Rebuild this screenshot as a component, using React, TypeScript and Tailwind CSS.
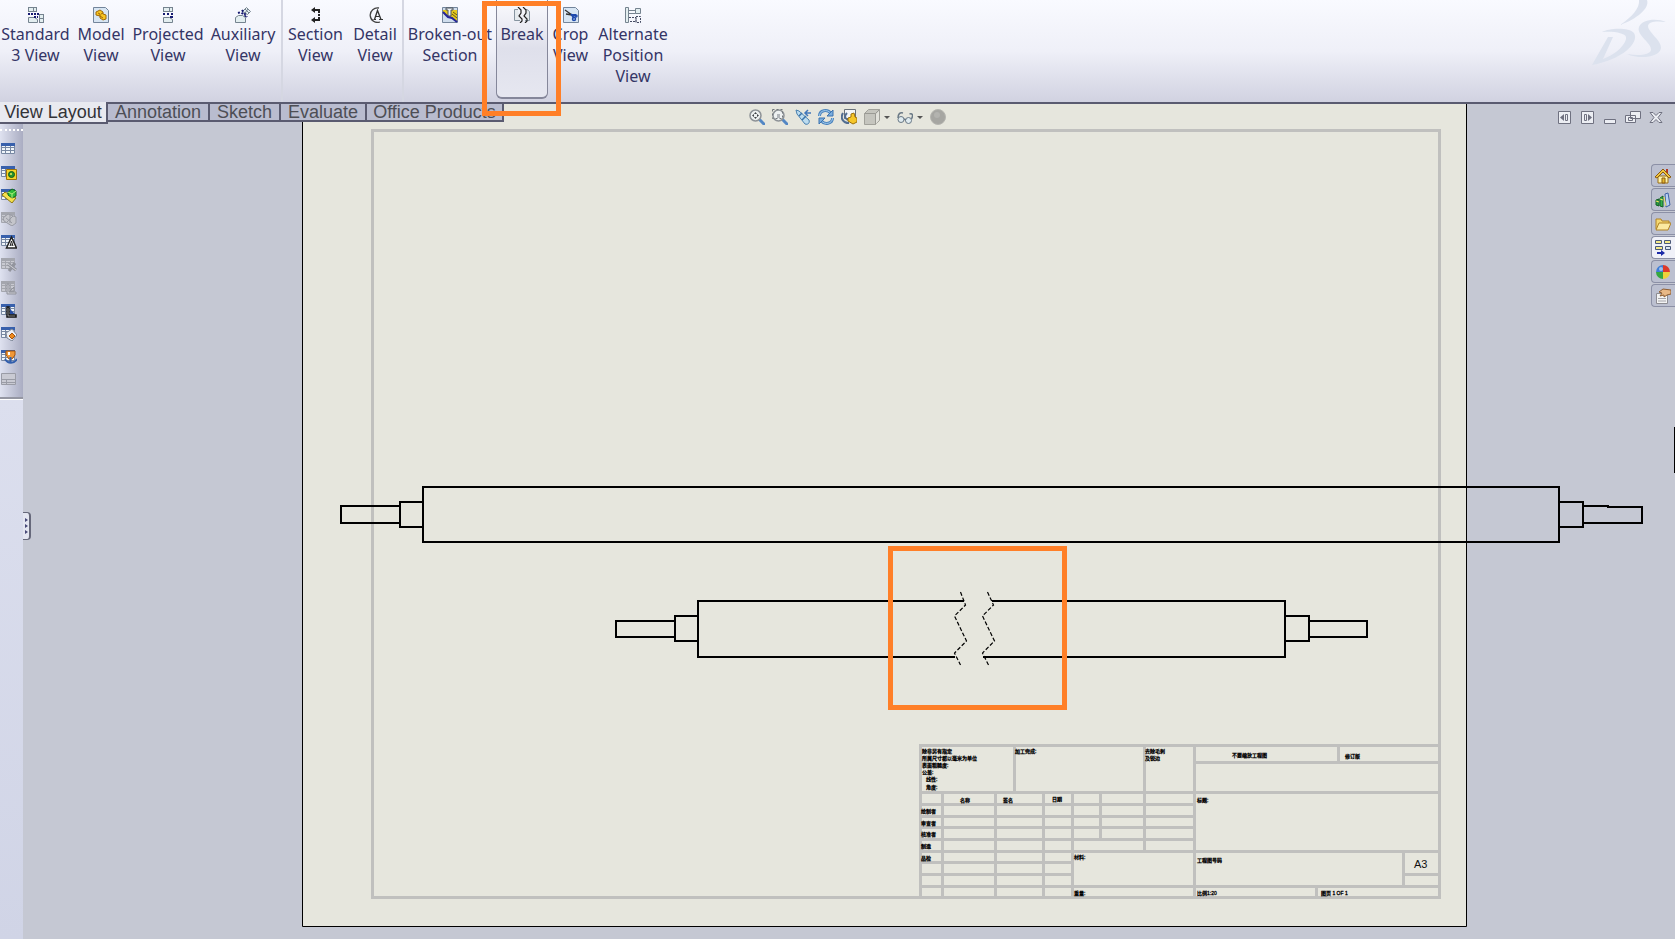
import React, { useState } from 'react';

type Icon = React.ReactNode;

const Svg = ({ children, className = 'h-4 w-4' }: { children: React.ReactNode; className?: string }) => (
  <svg viewBox="0 0 16 16" className={`${className} shrink-0`} fill="none" aria-hidden="true">
    {children}
  </svg>
);

// Small light box used by most of the view icons
const Box = ({ x, y, w, h }: { x: number; y: number; w: number; h: number }) => (
  <rect x={x + 0.5} y={y + 0.5} width={w - 1} height={h - 1} fill="#e3eef0" stroke="#75838f" />
);

const Page = () => <path d="M.5.5h12l3 3v12H.5z" fill="#d7e5f3" stroke="#73859b" />;

const ribbonIcons: Record<string, Icon> = {
  standard: (
    <Svg>
      <Box x={0} y={0} w={9} h={5} />
      <path d="M5.5 0v5" stroke="#75838f" />
      <path d="M0 7h11" stroke="#161a70" strokeWidth="2" strokeDasharray="2 1" />
      <path d="M.5 10.5h6l3 2v3h-9z" fill="#e3eef0" stroke="#75838f" />
      <path d="M6 10h4" stroke="#161a70" strokeWidth="2" strokeDasharray="2 1" />
      <Box x={11} y={7} w={5} h={9} />
      <path d="M11 11.5h5" stroke="#75838f" />
    </Svg>
  ),
  model: (
    <Svg>
      <Page />
      <path d="M3 5l4-2 3 2v2l3 1v4l-3 1-3-2V9L3 8z" fill="#f6c321" stroke="#a06a08" />
      <path d="M5 6l2 1v2l3 2M8 7l2-1" stroke="#a06a08" />
    </Svg>
  ),
  projected: (
    <Svg>
      <Box x={3} y={0} w={10} h={5} />
      <path d="M9.5 0v5" stroke="#75838f" />
      <path d="M3 7h10" stroke="#161a70" strokeWidth="2" strokeDasharray="2 2" />
      <path d="M3.500 10.500h6l3 2v3h-9z" fill="#e3eef0" stroke="#75838f" />
      <path d="M10 10h3" stroke="#161a70" strokeWidth="2" />
    </Svg>
  ),
  auxiliary: (
    <Svg>
      <path d="M7.500 4.500l4-4 4 4-3 3z" fill="#e3eef0" stroke="#75838f" />
      <path d="M10 2l4 4M10 6l3-4" stroke="#75838f" />
      <path d="M3 6l3-1 5 5M7 3l5 7" stroke="#161a70" strokeWidth="2" strokeDasharray="2 2" />
      <path d="M.5 10.500l3-2h4l3 2v5H.5z" fill="#e3eef0" stroke="#75838f" />
    </Svg>
  ),
  section: (
    <Svg>
      <path d="M5 3h6v3M5 13h6v-3M11 7v2" stroke="#222" strokeWidth="2" />
      <path d="M7 0v6L3 3zM7 10v6l-4-3z" fill="#222" />
    </Svg>
  ),
  detail: (
    <Svg>
      <path d="M12 1A7.300 7.300 0 1 0 13 15" stroke="#444" strokeWidth="1.300" />
      <path d="M7.500 12.500l3-9 3.500 9" stroke="#333" strokeWidth="1.300" />
      <path d="M8.500 9.500h4M6.500 12.500h2.500M12 12.500h4" stroke="#333" />
    </Svg>
  ),
  broken: (
    <Svg>
      <path d="M.5.5h15v15H.5z" fill="#cfdded" stroke="#73859b" />
      <path d="M1 3h14v12L9 10 4 9 1 6z" fill="#e6c91e" />
      <path d="M4 1h7v2H9v6H6V3H4z" fill="#edf3f7" stroke="#4c535a" />
      <path d="M1 5l5 5 4 1 5 4" stroke="#25259a" strokeWidth="2" />
      <path d="M11 5l4 3M10 7l5 4" stroke="#675a12" />
    </Svg>
  ),
  brk: (
    <Svg>
      <path d="M4 2.500H.5v11H6M11 2.500h2l2.500 2v9H11" fill="#e5eaee" stroke="#8794a0" />
      <path d="M4 0l3 3v3L5 9l3 3v2l-2 2M9 0l3 3v3l-2 3 3 3v2l-2 2" stroke="#222" strokeWidth="1.200" />
    </Svg>
  ),
  crop: (
    <Svg>
      <Page />
      <path d="M2 3l7 5M3 7l6 1" stroke="#333" strokeWidth="1.300" />
      <path d="M8 7l3 4M9 8h4" stroke="#1d49ad" strokeWidth="2" />
      <circle cx="11" cy="12" r="1.500" stroke="#1d49ad" strokeWidth="1.500" />
      <circle cx="13" cy="9" r="1" stroke="#1d49ad" strokeWidth="1.500" />
    </Svg>
  ),
  alternate: (
    <Svg>
      <path d="M.5.5h3v15h-3zM3.500 3.500h7M3.500 6.500h7M10.500 1.500h5v5h-5z" fill="#e3eef0" stroke="#75838f" />
      <path d="M4 10.500h7v4H4M11 9.500h4.500v6H11z" stroke="#454b62" strokeDasharray="2 1" />
    </Svg>
  ),
};

const ribbonGroups = [
  [
    { id: 'standard', lines: ['Standard', '3 View'], width: 'w-[71px]' },
    { id: 'model', lines: ['Model', 'View'], width: 'w-[60px]' },
    { id: 'projected', lines: ['Projected', 'View'], width: 'w-[74px]' },
    { id: 'auxiliary', lines: ['Auxiliary', 'View'], width: 'w-[76px]' },
  ],
  [
    { id: 'section', lines: ['Section', 'View'], width: 'w-[65px]' },
    { id: 'detail', lines: ['Detail', 'View'], width: 'w-[54px]' },
  ],
  [
    { id: 'broken', lines: ['Broken-out', 'Section'], width: 'w-[92px]' },
    { id: 'brk', lines: ['Break'], width: 'w-[52px]' },
    { id: 'crop', lines: ['Crop', 'View'], width: 'w-[45px]' },
    { id: 'alternate', lines: ['Alternate', 'Position', 'View'], width: 'w-[80px]' },
  ],
];

function Ribbon() {
  return (
    <header className="relative flex h-[104px] shrink-0 overflow-hidden border-b-2 border-[#5a5b70] bg-linear-to-b from-[#f9faff] via-[#eff0f8] to-[#d1d2e1]">
      {ribbonGroups.map((group, i) => (
        <div key={i} className={`flex ${i < 2 ? 'border-r-2 border-[#d5d7e2]' : ''}`}>
          {group.map((item) => (
            <button
              key={item.id}
              type="button"
              className={`flex flex-col items-center whitespace-nowrap pt-[7px] text-[16px] leading-[21px] text-[#343566] ${item.width} ${
                item.id === 'brk'
                  ? 'h-[99px] rounded-b-md border-x border-b-2 border-[#85879a] bg-linear-to-b from-[#fafafe] via-[#dfe0eb] to-[#e6e7f0]'
                  : ''
              }`}
            >
              {ribbonIcons[item.id]}
              <span className="mt-px flex flex-col items-center">
                {item.lines.map((line) => (
                  <span key={line}>{line}</span>
                ))}
              </span>
            </button>
          ))}
        </div>
      ))}
      <svg viewBox="0 0 75 66" className="ml-auto mr-2 h-[66px] w-[75px]" fill="#dce2ee" aria-hidden="true">
        <path d="M47 0h8c3 8-10 19-27 25 12-8 20-17 19-25z" />
        <path d="M10 32c7-4 27-5 32 1 6 10-13 27-42 32l16-28h5L11 59c14-5 24-16 23-22-1-4-12-6-24-5z" />
        <path d="M74 22c-9-1-17-1-18 4 0 6 14 15 13 22-1 9-21 12-34 6 12 2 23 1 24-4 1-7-15-15-12-23 3-8 18-9 27-5z" />
      </svg>
    </header>
  );
}

const tabs = [
  { name: 'View Layout', width: 'w-[108px]' },
  { name: 'Annotation', width: 'w-[102px]' },
  { name: 'Sketch', width: 'w-[71px]' },
  { name: 'Evaluate', width: 'w-[86px]' },
  { name: 'Office Products', width: 'w-[137px]' },
];

function SheetTabs() {
  const [active, setActive] = useState('View Layout');
  return (
    <nav className="absolute left-0 top-0 flex items-start font-['Liberation_Sans',sans-serif] text-[18px]">
      {tabs.map((tab) => (
        <button
          key={tab.name}
          type="button"
          onClick={() => setActive(tab.name)}
          className={`whitespace-nowrap border-b-2 border-r-2 border-[#5a5b70] ${tab.width} ${
            active === tab.name
              ? '-mt-[2px] h-[22px] bg-[#e9eaf0] leading-[20px] text-[#333338]'
              : 'h-[18px] bg-[#b9bccf] leading-[16px] text-[#4d4e55]'
          }`}
        >
          {tab.name}
        </button>
      ))}
    </nav>
  );
}

const Grid = ({ off = false }: { off?: boolean }) => (
  <>
    <path d="M.5 2.500h13v10H.5z" fill={off ? '#c9cad1' : '#f0f5fa'} stroke={off ? '#a4a6ae' : '#7888a2'} />
    <path d="M.5 6.500h13M.5 9.500h13M4.500 5v8M9.500 5v8" stroke={off ? '#a4a6ae' : '#7888a2'} />
    <path d="M0 2h14v3H0z" fill={off ? '#a4a6ae' : '#3860ac'} />
  </>
);

const leftTools: { label: string; icon: Icon }[] = [
  { label: 'General table', icon: <Grid /> },
  {
    label: 'Hole table',
    icon: (
      <>
        <Grid />
        <path d="M5.500 5.500h10v10h-10z" fill="#f5d629" stroke="#a07207" />
        <circle cx="10.500" cy="10.500" r="3" fill="#27962e" stroke="#15591b" />
        <circle cx="10" cy="10" r="1" fill="#f5e859" />
      </>
    ),
  },
  {
    label: 'Bill of materials',
    icon: (
      <>
        <Grid />
        <path d="M1 8l3-3 11 6-4 5z" fill="#f3e04d" stroke="#8d7713" />
        <path d="M7 5l4-3 4 2v5l-4 2-4-3z" fill="#2dbb3b" stroke="#14661c" />
        <path d="M7 5l4 2 4-3M11 7v4" stroke="#b4ed7a" />
      </>
    ),
  },
  {
    label: 'Excel based table',
    icon: (
      <>
        <Grid off />
        <path d="M2 8l5-4 8 3v6l-4 3-8-5z" fill="#c4c5cb" stroke="#999ba4" />
        <path d="M5 8l6 5M6 12l6-6M9 5v8" stroke="#999ba4" />
      </>
    ),
  },
  {
    label: 'Revision table',
    icon: (
      <>
        <Grid />
        <path d="M10.500 4l5 11h-10z" fill="#fff" stroke="#222" strokeWidth="1.500" />
        <path d="M9 13l1.500-5 1.500 5M9 12h3" stroke="#222" />
      </>
    ),
  },
  {
    label: 'Weldment table',
    icon: (
      <>
        <Grid off />
        <path d="M7 8l8 6M14 7l-6 8" stroke="#92949d" strokeWidth="3" />
        <path d="M7 8l8 6" stroke="#d0d1d7" />
      </>
    ),
  },
  {
    label: 'Bend table',
    icon: (
      <>
        <Grid off />
        <path d="M8 5v8h7v2H6V5z" fill="#c9cad1" stroke="#92949d" />
        <path d="M9 12l4-4v4z" stroke="#92949d" />
      </>
    ),
  },
  {
    label: 'Weld table',
    icon: (
      <>
        <Grid />
        <path d="M6 5h2v8h7v2H6z" fill="#fff" stroke="#111" strokeWidth="1.500" />
        <path d="M9 12V7l5 5z" fill="#264da3" />
      </>
    ),
  },
  {
    label: 'Punch table',
    icon: (
      <>
        <Grid />
        <path d="M5 8l6-4 5 6-5 6-5-3z" fill="#edf0f5" stroke="#7d8798" />
        <path d="M11 8l3 3-3 3-3-3z" fill="#ee8a1d" stroke="#a6550d" />
      </>
    ),
  },
  {
    label: 'Design table',
    icon: (
      <>
        <Grid />
        <path d="M5 3h9v4l-3 4H8L5 7z" fill="#f09838" stroke="#a6550d" />
        <path d="M8 4v3" stroke="#fff" strokeWidth="2" />
        <path d="M9.500 9v5M4 11c3 5 9 5 12 0" stroke="#315eac" strokeWidth="2" />
      </>
    ),
  },
  {
    label: 'Title block table',
    icon: <path d="M.5 2.500h14v11H.5zM.5 8.500h14M.5 11.500h14M5.500 8v5" fill="#c9cad3" stroke="#9a9ca6" />,
  },
];

function TableToolbar() {
  return (
    <aside className="flex w-[23px] shrink-0 flex-col bg-[#d9dceb]">
      <div className="mt-5 flex flex-col border-b-2 border-[#9496a2] bg-linear-to-r from-[#dfe2f0] to-[#aaadc2] pb-[7px] pt-[5px]">
        <div className="mb-[6px] border-t-2 border-dotted border-white" />
        {leftTools.map((tool) => (
          <button key={tool.label} type="button" aria-label={tool.label} className="flex h-[23px] items-center pl-px">
            <Svg>{tool.icon}</Svg>
          </button>
        ))}
      </div>
      <div className="flex-1 border-t border-white bg-linear-to-b from-[#dcdfee] to-[#d0d4e6]" />
    </aside>
  );
}

const Lens = () => (
  <>
    <path d="M10 10l5 5" stroke="#5387c4" strokeWidth="3" strokeLinecap="round" />
    <circle cx="6.500" cy="6.500" r="5.500" fill="#eef1f1" stroke="#8d9296" strokeWidth="1.500" />
  </>
);

const viewTools: { label: string; icon: Icon; menu?: boolean; width: string }[] = [
  {
    label: 'Zoom to fit',
    width: 'w-[23px]',
    icon: (
      <>
        <Lens />
        <path d="M6.500 3l1.500 2H5zM6.500 10L8 8H5zM3 6.500L5 5v3zM10 6.500L8 5v3z" fill="#3f4347" />
      </>
    ),
  },
  {
    label: 'Zoom to area',
    width: 'w-[23px]',
    icon: (
      <>
        <Lens />
        <path d="M.5.5h10v9H.5z" stroke="#73787c" strokeDasharray="2 2" />
        <path d="M5 5h3v4H5z" fill="#b2b6ba" />
      </>
    ),
  },
  {
    label: 'Previous view',
    width: 'w-[23px]',
    icon: (
      <>
        <path d="M1 1l3 1 10 9c1 3-1 5-4 4L2 5z" fill="#bcdcef" stroke="#4a81b0" />
        <path d="M4 7l3-3M7 11l4-4" stroke="#3a73aa" strokeWidth="1.500" />
        <path d="M16 4h-6M13 1l-3 3 3 3" stroke="#4277ba" strokeWidth="1.500" />
      </>
    ),
  },
  {
    label: 'Rotate view',
    width: 'w-[23px]',
    icon: (
      <>
        <path d="M1.500 7c0-6 8-7 11-3M14.500 9c0 6-8 7-11 3" stroke="#4a83bd" strokeWidth="3" />
        <path d="M1.500 7c0-6 8-7 11-3M14.500 9c0 6-8 7-11 3" stroke="#a5cdee" />
        <path d="M15 1v6H9zM1 15V9h6z" fill="#79aedf" stroke="#3d73ae" />
      </>
    ),
  },
  {
    label: '3D drawing view',
    width: 'w-[23px]',
    icon: (
      <>
        <path d="M3.500.5h11v9h-11z" fill="#f3f6f7" stroke="#69717a" />
        <path d="M2 4c-3 5 0 10 6 10M6 4c-4 4-1 7 3 7" stroke="#526e91" strokeWidth="2" />
        <path d="M7 9l3-1V5l3-1 1 4 2 1v4l-4 2-5-3z" fill="#f5c629" stroke="#9c7009" />
      </>
    ),
  },
  {
    label: 'Display style',
    menu: true,
    width: 'w-[33px]',
    icon: (
      <>
        <path d="M.5 4.500l4-4h11v11l-4 4H.5z" fill="#c5c5be" stroke="#a1a19a" />
        <path d="M12 5l3-3v9l-3 4z" fill="#e2e2db" />
        <path d="M.5 4.500h11v11M11.500 4.500l4-4" stroke="#9a9a94" />
      </>
    ),
  },
  {
    label: 'Hide/show items',
    menu: true,
    width: 'w-[33px]',
    icon: (
      <>
        <circle cx="4" cy="10.500" r="3" fill="#dfebf0" stroke="#697885" />
        <circle cx="11.500" cy="11.500" r="3" fill="#dfebf0" stroke="#697885" />
        <path d="M1 9c0-4 2-6 5-5M7 10l2 1M14.500 10c2-4 1-6-2-5" stroke="#697885" strokeWidth="1.500" />
      </>
    ),
  },
  {
    label: 'Edit appearance',
    width: 'w-[23px]',
    icon: (
      <>
        <circle cx="8" cy="8" r="7.500" fill="#a6a6a2" stroke="#b5b5b0" />
        <circle cx="7" cy="6" r="3" fill="#b3b3af" />
      </>
    ),
  },
];

function ViewToolbar() {
  return (
    <div className="absolute inset-x-0 top-[5px] flex justify-center pl-1">
      {viewTools.map((tool) => (
        <button key={tool.label} type="button" aria-label={tool.label} className={`flex h-4 items-center gap-1 ${tool.width}`}>
          <Svg>{tool.icon}</Svg>
          {tool.menu && <span className="border-x-3 border-t-3 border-x-transparent border-t-[#555]" />}
        </button>
      ))}
    </div>
  );
}

const windowTools: { label: string; icon: Icon }[] = [
  {
    label: 'Previous pane',
    icon: (
      <>
        <path d="M2.500 2.500h12v12h-12z" fill="#eceef3" stroke="#6f7180" />
        <path d="M9.500 5.500h2v6h-2z" stroke="#6f7180" />
        <path d="M8 5v7L4 8.500z" fill="#6f7180" />
      </>
    ),
  },
  {
    label: 'Next pane',
    icon: (
      <>
        <path d="M2.500 2.500h12v12h-12z" fill="#eceef3" stroke="#6f7180" />
        <path d="M5.500 5.500h2v6h-2z" stroke="#6f7180" />
        <path d="M9 5v7l4-3.500z" fill="#6f7180" />
      </>
    ),
  },
  { label: 'Minimize', icon: <path d="M2.500 10.500h11v4h-11z" fill="#eceef3" stroke="#6f7180" /> },
  {
    label: 'Restore',
    icon: <path d="M5.500 2.500h10v7h-10zM.5 6.500h10v7H.5zM3.500 8.500h4v3h-4z" fill="#eceef3" stroke="#6f7180" />,
  },
  {
    label: 'Close',
    icon: <path d="M2 3.500h3l3 3 3-3h3L10 8.500l4 5h-3l-3-3-3 3H2l4-5z" fill="#eceef3" stroke="#6f7180" />,
  },
];

const taskTabs: { label: string; icon: Icon }[] = [
  {
    label: 'Resources',
    icon: (
      <>
        <path d="M11 1h2v5h-2z" fill="#b33622" />
        <path d="M3 8h10v7H3z" fill="#fff3a8" stroke="#9a6c14" />
        <path d="M0 9l8-8 8 8-2 1-6-6-6 6z" fill="#f2c53c" stroke="#8a5a10" />
        <path d="M7 10h3v5H7z" fill="#e6b82d" stroke="#8a5a10" />
      </>
    ),
  },
  {
    label: 'Design Library',
    icon: (
      <>
        <path d="M1 8l3-1v7l-3-1z" fill="#2a9d45" stroke="#145f26" />
        <path d="M5 6l3-2v11l-3-1z" fill="#35b04f" stroke="#145f26" />
        <path d="M10 2l3-1 2 12-4 2z" fill="#b7d0f3" stroke="#3f60a3" />
        <path d="M1 9l3 1M5 7l3 1M9 5l2 9" stroke="#f2e35e" />
      </>
    ),
  },
  {
    label: 'File Explorer',
    icon: (
      <>
        <path d="M1 13V3h5l1 2h7v3" fill="#f5d873" stroke="#b08224" />
        <path d="M1 14L4 7h12l-3 7z" fill="#fbeaa1" stroke="#b08224" />
      </>
    ),
  },
  {
    label: 'View Palette',
    icon: (
      <>
        <path d="M.5.5h6v3h-6zM9.500.5h6v3h-6zM.5 6.500h7v3h-7z" fill="#f4e98a" stroke="#4a587a" />
        <path d="M10.500 6.500h5v3h-5z" fill="#dce6f1" stroke="#4a587a" />
        <path d="M2 13h5" stroke="#1b2aa8" strokeWidth="2" />
        <path d="M6 10l4 3-4 3z" fill="#1b2aa8" />
      </>
    ),
  },
  {
    label: 'Appearances',
    icon: (
      <>
        <path d="M8 8V1a7 7 0 0 0-7 7z" fill="#3f7ed8" />
        <path d="M8 8h7a7 7 0 0 0-7-7z" fill="#dc392b" />
        <path d="M8 8v7a7 7 0 0 0 7-7z" fill="#eed23b" />
        <path d="M8 8H1a7 7 0 0 0 7 7z" fill="#36a740" />
        <circle cx="6" cy="5" r="2" fill="#fff" opacity="0.500" />
      </>
    ),
  },
  {
    label: 'Custom Properties',
    icon: (
      <>
        <path d="M1.500 5.500h11v10h-11z" fill="#f3f3f3" stroke="#8c8c92" />
        <path d="M3 10.500h8M3 13h8" stroke="#a4a4aa" />
        <path d="M4 4l4-3 8 1v4l-4 1-3 2V7L5 8l2-3z" fill="#e8b886" stroke="#8e5d31" />
      </>
    ),
  },
];

function TaskPane() {
  return (
    <div className="absolute right-0 top-[60px] flex flex-col gap-px">
      {taskTabs.map((tab) => (
        <button
          key={tab.label}
          type="button"
          aria-label={tab.label}
          className={`flex h-[23px] w-6 items-center rounded-l-sm border-y border-l border-[#8c90a6] pl-[3px] ${
            tab.label === 'View Palette' ? 'bg-[#f0f1f8]' : 'bg-[#bcc0d0]'
          }`}
        >
          <Svg>{tab.icon}</Svg>
        </button>
      ))}
    </div>
  );
}

// Title block labels: [x, baseline, text]
const labels: [number, number, string][] = [
  [922, 753, '除非另有指定'],
  [922, 760, '所属尺寸都以毫米为单位'],
  [922, 767, '表面粗糙度:'],
  [922, 774, '公差:'],
  [926, 781, '线性:'],
  [926, 789, '角度:'],
  [1015, 753, '加工完成:'],
  [1145, 753, '去除毛刺'],
  [1145, 760, '及锐边'],
  [960, 802, '名称'],
  [1003, 802, '签名'],
  [1052, 801, '日期'],
  [921, 813, '绘制者'],
  [921, 825, '审查者'],
  [921, 836, '核准者'],
  [921, 848, '制造'],
  [921, 860, '品检'],
  [1074, 859, '材料:'],
  [1074, 895, '重量:'],
  [1232, 757, '不要缩放工程图'],
  [1345, 758, '修订版'],
  [1197, 802, '标题:'],
  [1197, 862, '工程图号码'],
  [1197, 895, '比例1:20'],
  [1321, 895, '图页 1 OF 1'],
];

function Drawing() {
  return (
    <svg viewBox="23 104 1652 835" className="block h-full w-full" fill="none" role="img" aria-label="Shaft drawing">
      <path d="M302.500 100v826.500h1164V100z" fill="#e6e6dd" stroke="#000" />

      {/* Sheet frame and title block */}
      <path
        d="M372.500 130.500h1067v767h-1067z M920.500 898V745.500h519
           M920 792.500h519 M920 804.500h274 M920 816.500h274 M920 827.500h274 M920 839.500h274 M920 851.500h519
           M920 862.500h152 M920 874.500h152 M920 886.500h152 M1072 886.500h367
           M942.500 792v106 M995.500 792v106 M1043.500 792v106 M1072.500 792v106 M1100.500 792v47
           M1014.500 745v47 M1144.500 745v106 M1194.500 745v153 M1194 762.500h245
           M1338.500 745v17 M1403.500 851v35 M1403 874.500h36 M1316.500 886v12"
        stroke="#c0c0be"
        strokeWidth="3"
      />
      <g fill="#000" stroke="#000" strokeWidth="0.300" fontFamily="'Liberation Sans', 'Noto Sans CJK SC', sans-serif" fontSize="5">
        {labels.map(([x, y, text]) => (
          <text key={`${x}-${y}`} x={x} y={y}>
            {text}
          </text>
        ))}
      </g>
      <text x="1414" y="868" fill="#111" fontFamily="'Liberation Sans', sans-serif" fontSize="11">
        A3
      </text>

      {/* Full length shaft */}
      <path
        d="M423 487h1136v55H423z M423 502h-23v25h23 M400 506h-59v17h59
           M1559 502h24v25h-24 M1583 506h25v1h34v16h-59"
        stroke="#000"
        strokeWidth="2"
      />

      {/* Broken shaft */}
      <path
        d="M964 601H698v56h257 M992 601h293v56H983 M698 616h-23v25h23 M675 621h-59v16h59
           M1285 616h24v25h-24 M1309 621h58v16h-58"
        stroke="#000"
        strokeWidth="2"
      />
      <path
        d="M960.500 592l5 13-11 11 12 25-12 12 6 12 M987.500 592l6 13-11 11 12 25-12 12 6 12"
        stroke="#000"
        strokeWidth="1.200"
        strokeDasharray="4 2"
      />
      <path d="M890.500 548.500h174v159h-174z" stroke="#ff7f27" strokeWidth="5" />
    </svg>
  );
}

export default function App() {
  return (
    <div className="relative flex h-screen flex-col overflow-hidden bg-[#c5c8d3] font-['Noto_Sans',sans-serif]">
      <Ribbon />

      <main className="relative flex min-h-0 flex-1">
        <TableToolbar />
        <section className="relative min-w-0 flex-1">
          <Drawing />
          <ViewToolbar />
          <div className="absolute right-[11px] top-[5px] flex gap-[7px]">
            {windowTools.map((tool) => (
              <button key={tool.label} type="button" aria-label={tool.label}>
                <Svg>{tool.icon}</Svg>
              </button>
            ))}
          </div>
          <TaskPane />
          <button
            type="button"
            aria-label="Expand panel"
            className="absolute left-0 top-[408px] flex h-7 w-2 flex-col items-center justify-around rounded-r-sm border-y border-r-2 border-[#66687a] bg-[#e4e6f1] py-1"
          >
            {[0, 1, 2].map((n) => (
              <span key={n} className="border-y-2 border-l-3 border-y-transparent border-l-[#484a78]" />
            ))}
          </button>
          <div className="absolute right-0 top-[323px] h-[46px] w-px bg-black" />
        </section>
        <SheetTabs />
      </main>

      {/* Highlight around the Break command */}
      <div className="pointer-events-none absolute left-[482px] top-px h-[115px] w-[79px] border-5 border-[#ff7f27]" />
    </div>
  );
}
